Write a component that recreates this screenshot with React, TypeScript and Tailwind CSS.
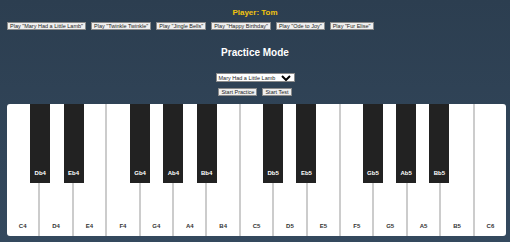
import React from "react";

const songs = [
  'Play "Mary Had a Little Lamb"',
  'Play "Twinkle Twinkle"',
  'Play "Jingle Bells"',
  'Play "Happy Birthday"',
  'Play "Ode to Joy"',
  'Play "Fur Elise"',
];

const whites = ["C4", "D4", "E4", "F4", "G4", "A4", "B4", "C5", "D5", "E5", "F5", "G5", "A5", "B5", "C6"];
const blacks: [string, number][] = [
  ["Db4", 1], ["Eb4", 2], ["Gb4", 4], ["Ab4", 5], ["Bb4", 6],
  ["Db5", 8], ["Eb5", 9], ["Gb5", 11], ["Ab5", 12], ["Bb5", 13],
];

export default function App() {
  const keyW = 499 / 15;
  return (
    <div
      className="w-[510px] h-[242px] overflow-hidden bg-gradient-to-b from-[#2c3e50] to-[#34495e] px-[7px] pt-[8px] antialiased"
      style={{ fontFamily: '"Liberation Sans", Arial, sans-serif' }}
    >
      <div className="text-center text-[8px] leading-[10px] font-bold text-[#f1c40f]">Player: Tom</div>
      <div className="mt-[4px] flex gap-[5px]">
        {songs.map((s) => (
          <button
            key={s}
            className="h-[8px] px-[2px] bg-[#efefef] border border-[#8a8a8a] text-[5.5px] leading-[6px] text-[#222] whitespace-nowrap"
          >
            {s}
          </button>
        ))}
      </div>
      <div className="mt-[17px] text-center text-[10px] leading-[12px] font-bold text-white">Practice Mode</div>
      <div className="mt-[14px] flex justify-center">
        <div className="w-[79px] h-[9px] bg-white border border-[#8a8a8a] flex items-center justify-between pl-[2px] pr-[3px]">
          <span className="text-[5.5px] leading-[6px] text-[#222] whitespace-nowrap">Mary Had a Little Lamb</span>
          <svg width="10" height="6" viewBox="0 0 10 6">
            <path d="M1 1 L5 5 L9 1" stroke="#000" strokeWidth="2" fill="none" />
          </svg>
        </div>
      </div>
      <div className="mt-[6px] flex justify-center gap-[5px]">
        <button className="h-[8px] px-[2px] bg-[#efefef] border border-[#8a8a8a] text-[5.5px] leading-[6px] text-[#222]">Start Practice</button>
        <button className="h-[8px] px-[2px] bg-[#efefef] border border-[#8a8a8a] text-[5.5px] leading-[6px] text-[#222]">Start Test</button>
      </div>
      <div className="relative mt-[8px] w-[499px] h-[132px] bg-white rounded-[3px] overflow-hidden flex">
        {whites.map((w, i) => (
          <div
            key={w}
            className={`flex-1 flex items-end justify-center pb-[6px] ${i > 0 ? "border-l-2 border-[#cccccc]" : ""}`}
          >
            <span className="text-[6px] leading-[7px] font-bold text-[#333333]">{w}</span>
          </div>
        ))}
        {blacks.map(([b, i]) => (
          <div
            key={b}
            className="absolute top-0 w-[20px] h-[79px] bg-[#222222] flex items-end justify-center pb-[6px]"
            style={{ left: i * keyW - 10 }}
          >
            <span className="text-[6px] leading-[7px] font-bold text-white">{b}</span>
          </div>
        ))}
      </div>
    </div>
  );
}
